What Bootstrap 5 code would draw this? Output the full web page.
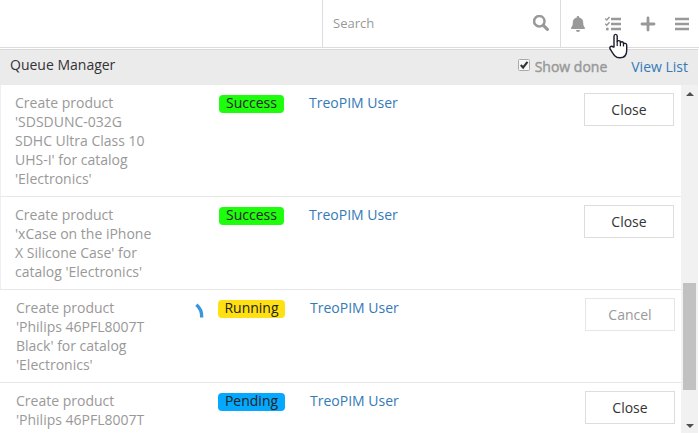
<!DOCTYPE html>
<html lang="en">
<head>
<meta charset="utf-8">
<meta name="viewport" content="width=device-width, initial-scale=1">
<title>Queue Manager</title>
<link href="https://cdn.jsdelivr.net/npm/bootstrap@5.3.0/dist/css/bootstrap.min.css" rel="stylesheet">
<style>
body{font:14px/19px "Open Sans",sans-serif;color:#333;height:433px;width:699px}
a{color:#337ab7}
.topbar{height:48px;border-bottom:1px solid #dcdcdc}
.searchbox{width:239px;margin-left:322px;border-left:1px solid #dcdcdc;border-right:1px solid #dcdcdc;padding:0 10px 0 10px}
.searchbox input{font-size:13px;color:#999;background:none;width:180px}
.searchbox input::placeholder{color:#999;opacity:1}
.tools{padding-left:8px}
.tools button{width:18px;height:18px}
.tools button + button{margin-left:17px}
.qhead{height:36px;margin-top:1px;border-top:1px solid #d8d8d8;background:#ebebeb;padding:0 10px 5px 10px;width:698px}
.heading{padding-bottom:2px}
.done{color:#999;-webkit-text-stroke:.45px #999}
.done-label{padding-top:3px}
.tick{width:12px;height:12px;margin-right:5px}
.tick svg{display:block}
.view-link{padding-top:2px}
.queue{height:348px}
.job{border-bottom:1px solid #e8e8e8;border-left:1px solid #eee;padding:8px 7px 8px 14px}
.job.shift{padding-left:16px;padding-right:6px;border-left:0}
.desc{width:140px;color:#999}
.state{width:129px}
.who{margin-left:25px}
.tag{display:block;height:18px;line-height:16px;border-radius:4px;color:#222;text-align:center;margin-top:2px}
.ok{width:65px;background:#1dfd0c}
.run{width:67px;background:#ffe012}
.wait{width:67px;background:#04a9ff}
.act{width:90px;height:33px;border:1px solid #ddd;border-radius:0;background:#fff;font-size:14px;line-height:19px;color:#333;padding:0}
.act:disabled{color:#999;border-color:#e6e6e6;opacity:1}
.sbar{width:17px;margin-right:1px;background:#f1f1f1;padding:7px 2px 5px}
.thumb{height:107px;width:13px;margin-top:187px;background:#c1c1c1}
.pointer{position:absolute;left:609px;top:33px}
</style>
<script src="https://cdn.jsdelivr.net/npm/bootstrap@5.3.0/dist/js/bootstrap.bundle.min.js"></script>
</head>
<body class="bg-white overflow-hidden position-relative">
<header class="topbar d-flex">
  <div class="searchbox d-flex align-items-center justify-content-between flex-shrink-0">
    <input type="text" class="border-0 p-0" placeholder="Search" aria-label="Search">
    <svg width="17" height="17" viewBox="0 0 17 17" fill="none" stroke="#999"><circle cx="6.300" cy="6.300" r="5.200" stroke-width="2.500"/><path d="M10.100 10.100l4.300 4.300" stroke-width="3.200" stroke-linecap="round"/></svg>
  </div>
  <div class="tools d-flex align-items-center">
    <button class="btn border-0 p-0 d-flex" aria-label="Notifications"><svg width="18" height="18" viewBox="0 0 18 18" fill="#999"><path d="M9 1c-.7 0-1.200.5-1.200 1.100v.5C5.200 3.100 3.800 5 3.800 7.500c0 3-.8 4.100-1.600 5-.5.6-.2 1.500.7 1.500h12.200c.9 0 1.200-.9.700-1.500-.8-.9-1.600-2-1.600-5 0-2.500-1.400-4.400-4-4.900v-.5C10.200 1.500 9.700 1 9 1zM7 15h4a2 2 0 0 1-4 0z"/></svg></button>
    <button class="btn border-0 p-0 d-flex" aria-label="Queue"><svg width="18" height="18" viewBox="0 0 18 18" fill="none" stroke="#999"><path d="M7 4h10M7 9h10M7 14h10" stroke-width="2.400"/><path d="M1.300 3.600l1.500 1.400 2.700-3M1.300 8.800l1.500 1.400 2.700-3" stroke-width="1.500"/><circle cx="3.300" cy="14" r="1.500" fill="#999" stroke="none"/></svg></button>
    <button class="btn border-0 p-0 d-flex" aria-label="Create"><svg width="18" height="18" viewBox="0 0 18 18" fill="none" stroke="#999"><path d="M9 3v12M3 9h12" stroke-width="2.800" stroke-linecap="round"/></svg></button>
    <button class="btn border-0 p-0 d-flex" aria-label="Menu"><svg width="18" height="18" viewBox="0 0 18 18" stroke="#999"><path d="M1 4h14M1 9h14M1 14h14" stroke-width="2.400"/></svg></button>
  </div>
</header>
<div class="qhead d-flex align-items-center">
  <span class="heading me-auto">Queue Manager</span>
  <span class="done d-flex align-items-center"><span class="tick"><svg width="12" height="12" viewBox="0 0 12 12"><rect x=".5" y=".5" width="11" height="11" rx="1" fill="#f7f7f7" stroke="#aaa"/><path d="M2.800 6l2.300 2.500L9.500 2.800" fill="none" stroke="#333" stroke-width="2.100"/></svg></span><span class="done-label">Show done</span></span>
  <a href="#" class="view-link text-decoration-none ms-4">View List</a>
</div>
<main class="queue d-flex overflow-hidden">
  <div class="flex-grow-1">
    <div class="job d-flex align-items-start">
      <div class="desc">Create product<br>'SDSDUNC-032G<br>SDHC Ultra Class 10<br>UHS-I' for catalog<br>'Electronics'</div>
      <div class="state d-flex justify-content-end"><span class="tag ok">Success</span></div>
      <a href="#" class="who text-decoration-none me-auto">TreoPIM User</a>
      <button class="btn act">Close</button>
    </div>
    <div class="job d-flex align-items-start">
      <div class="desc">Create product<br>'xCase on the iPhone<br>X Silicone Case' for<br>catalog 'Electronics'</div>
      <div class="state d-flex justify-content-end"><span class="tag ok">Success</span></div>
      <a href="#" class="who text-decoration-none me-auto">TreoPIM User</a>
      <button class="btn act">Close</button>
    </div>
    <div class="job shift d-flex align-items-start">
      <div class="desc">Create product<br>'Philips 46PFL8007T<br>Black' for catalog<br>'Electronics'</div>
      <div class="state d-flex justify-content-end"><svg class="me-2" width="20" height="20" viewBox="0 0 20 20" fill="none" stroke="#3a96dc" stroke-width="3.400"><path d="M6.400 6.800q5.700 4.700 5.300 12.700"/></svg><span class="tag run">Running</span></div>
      <a href="#" class="who text-decoration-none me-auto">TreoPIM User</a>
      <button class="btn act" disabled>Cancel</button>
    </div>
    <div class="job shift d-flex align-items-start">
      <div class="desc">Create product<br>'Philips 46PFL8007T</div>
      <div class="state d-flex justify-content-end"><span class="tag wait">Pending</span></div>
      <a href="#" class="who text-decoration-none me-auto">TreoPIM User</a>
      <button class="btn act">Close</button>
    </div>
  </div>
  <div class="sbar d-flex flex-column align-items-center flex-shrink-0">
    <svg width="8" height="4" viewBox="0 0 8 4" fill="#505050"><path d="M0 4L4 0l4 4z"/></svg>
    <div class="thumb"></div>
    <svg class="mt-auto" width="8" height="4" viewBox="0 0 8 4" fill="#505050"><path d="M0 0h8L4 4z"/></svg>
  </div>
</main>
<svg class="pointer" width="19" height="26" viewBox="0 0 19 26"><path d="M5 14V3.200c0-2.400 3.200-2.400 3.200 0v5.600c0-1.700 3.200-1.600 3.200.2v.8c.3-1.600 3.100-1.400 3.100.5v.7c.5-1.200 3.200-.9 3.200.9v5.500c0 4.800-2.600 7.300-7 7.300-4.400 0-6-2.800-9.500-8.600-1.200-2 1.200-3.900 3-2z" fill="#fff" stroke="#1c1c2c" stroke-width="1.400" stroke-linejoin="round"/><path d="M8.200 8.500v4.500M11.400 9.500v3.700M14.500 10.500v3" stroke="#1c1c2c" stroke-width="1.200"/></svg>
</body>
</html>
